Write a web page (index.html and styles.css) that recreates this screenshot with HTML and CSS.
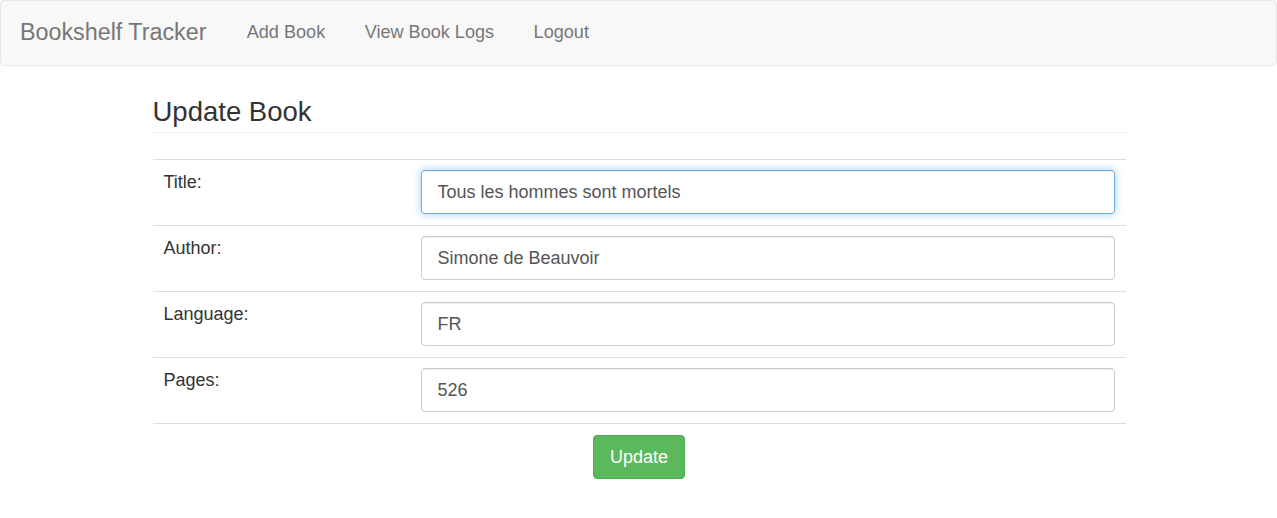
FILE: index.html
```html
<!DOCTYPE html>
<html lang="en">
<head>
<meta charset="utf-8">
<title>Update Book</title>
<link rel="stylesheet" href="styles.css">
</head>
<body>
<nav class="navbar">
  <a class="brand" href="#">Bookshelf Tracker</a>
  <ul class="nav-links">
    <li><a href="#">Add Book</a></li>
    <li><a href="#">View Book Logs</a></li>
    <li><a href="#">Logout</a></li>
  </ul>
</nav>
<main class="container">
  <h3 class="page-title">Update Book</h3>
  <form class="book-form">
    <table class="form-table">
      <tr>
        <td class="label-cell">Title:</td>
        <td class="input-cell"><input class="form-control focused" type="text" value="Tous les hommes sont mortels"></td>
      </tr>
      <tr>
        <td class="label-cell">Author:</td>
        <td class="input-cell"><input class="form-control" type="text" value="Simone de Beauvoir"></td>
      </tr>
      <tr>
        <td class="label-cell">Language:</td>
        <td class="input-cell"><input class="form-control" type="text" value="FR"></td>
      </tr>
      <tr>
        <td class="label-cell">Pages:</td>
        <td class="input-cell"><input class="form-control" type="text" value="526"></td>
      </tr>
    </table>
    <div class="actions">
      <button class="btn-success" type="button">Update</button>
    </div>
  </form>
</main>
</body>
</html>
```
FILE: styles.css
```css
* { box-sizing: border-box; }
html, body { margin: 0; padding: 0; }
body {
  font-family: "Liberation Sans", Arial, sans-serif;
  font-size: 18px;
  line-height: 1.42857;
  color: #333;
  background: #fff;
}
.navbar {
  display: flex;
  align-items: center;
  height: 66px;
  background: #f8f8f8;
  border: 1px solid #e7e7e7;
  border-radius: 4px;
  padding: 0 0 0 19px;
}
.brand {
  font-size: 23.3px;
  color: #777;
  text-decoration: none;
  margin-right: 20.5px;
  margin-top: -1px;
}
.nav-links {
  list-style: none;
  display: flex;
  margin: 0;
  padding: 0;
}
.nav-links a {
  display: block;
  padding: 0 19.75px;
  font-size: 18.1px;
  color: #777;
  text-decoration: none;
  margin-top: -1px;
}
.container {
  width: 974px;
  margin: 0 auto;
  padding-left: 1px;
}
.page-title {
  font-size: 27.5px;
  font-weight: 500;
  line-height: 1.1;
  margin: 31px 0 26px;
  padding-bottom: 5px;
  border-bottom: 1px solid #eee;
  color: #333;
}
.form-table {
  width: 100%;
  border-collapse: collapse;
}
.form-table td {
  border-top: 1px solid #ddd;
  padding: 10px 11px 11px;
  vertical-align: top;
}
.form-table tr:last-child td {
  border-bottom: 1px solid #ddd;
}
.label-cell {
  width: 257px;
}
.form-control {
  display: block;
  width: 100%;
  height: 44px;
  padding: 8px 16px;
  font-family: inherit;
  font-size: 18px;
  color: #555;
  background: #fff;
  border: 1px solid #ccc;
  border-radius: 4px;
  box-shadow: inset 0 1px 1px rgba(0,0,0,.075);
  outline: none;
}
.form-control.focused {
  border-color: #66afe9;
  box-shadow: inset 0 1px 1px rgba(0,0,0,.075), 0 0 8px rgba(102,175,233,.6);
}
.actions {
  display: flex;
  justify-content: center;
  padding-top: 11px;
}
.btn-success {
  height: 44px;
  padding: 0 16px;
  font-family: inherit;
  font-size: 18px;
  color: #fff;
  background: #5cb85c;
  border: 1px solid #4cae4c;
  border-radius: 4px;
  cursor: pointer;
}
```
